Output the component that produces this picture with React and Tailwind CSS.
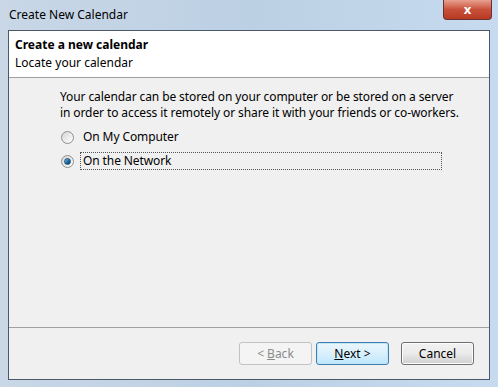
import React from "react";

function Radio({ checked }) {
  return (
    <span className="relative inline-flex h-[13px] w-[13px] items-center justify-center rounded-full border border-[#8e8f8f] bg-gradient-to-br from-[#d6d6d6] to-[#ffffff]">
      {checked && (
        <span className="h-[7px] w-[7px] rounded-full bg-gradient-to-br from-[#8ad0f0] via-[#1f6fa6] to-[#0f3e6a] border border-[#1d4f7a]" />
      )}
    </span>
  );
}

function Button({ children, focused, disabled, className = "" }) {
  return (
    <div
      className={
        "flex h-[23px] w-[73px] items-center justify-center rounded-[3px] border text-[12px] " +
        (disabled
          ? "border-[#c2c2c2] bg-[#f4f4f4] text-[#8b8b8b] "
          : focused
          ? "border-[#3c7fb1] bg-gradient-to-b from-[#eaf6fd] via-[#d9f0fc] to-[#bee6fd] text-black shadow-[inset_0_0_0_1px_#c4e5f6] "
          : "border-[#707070] bg-gradient-to-b from-[#f2f2f2] via-[#ebebeb] to-[#cfcfcf] text-black shadow-[inset_0_0_0_1px_#fcfcfc] ") +
        className
      }
    >
      {children}
    </div>
  );
}

export default function App() {
  return (
    <div
      className="relative h-[387px] w-[498px] overflow-hidden bg-gradient-to-r from-[#c9d7e6] via-[#bcd0e4] to-[#c6dbef]"
      style={{ fontFamily: '"Segoe UI", "Noto Sans", "Open Sans", sans-serif' }}
    >
      {/* Title bar */}
      <div className="flex h-[30px] items-center pl-[9px]">
        <span className="text-[12px] text-black">Create New Calendar</span>
      </div>

      {/* Close button */}
      <div className="absolute right-[6px] top-0 flex h-[20px] w-[49px] items-center justify-center rounded-b-[4px] border border-t-0 border-[#6b3030] bg-gradient-to-b from-[#e8a090] via-[#c8503a] to-[#b83a22]">
        <span className="text-[13px] font-bold leading-none text-white">x</span>
      </div>

      {/* Client area */}
      <div className="mx-[8px] flex h-[350px] flex-col border border-[#4a5868] bg-[#f0f0f0]">
        {/* Header */}
        <div className="flex h-[47px] flex-col justify-center border-b border-[#a0a0a0] bg-white pl-[6px] text-[12px] leading-[18px] text-black">
          <div className="font-bold">Create a new calendar</div>
          <div>Locate your calendar</div>
        </div>

        {/* Body */}
        <div className="flex-1 pl-[51px] pt-[11px] text-[12px] tracking-[-0.1px] text-black">
          <p className="leading-[16px]">
            Your calendar can be stored on your computer or be stored on a server
            <br />
            in order to access it remotely or share it with your friends or co-workers.
          </p>
          <div className="mt-[7px] flex flex-col gap-[6px]">
            <div className="flex h-[18px] items-center">
              <span className="ml-[1px] mr-[6px] flex">
                <Radio />
              </span>
              <span className="px-[3px]">On My Computer</span>
            </div>
            <div className="flex h-[18px] items-center">
              <span className="ml-[1px] mr-[6px] flex">
                <Radio checked />
              </span>
              <span className="flex h-[18px] w-[362px] items-center border border-dotted border-[#555] px-[2px]">
                On the Network
              </span>
            </div>
          </div>
        </div>

        {/* Button bar */}
        <div className="flex h-[52px] items-center justify-end gap-[4px] border-t border-[#a0a0a0] pr-[15px]">
          <Button disabled>
            &lt; <span className="ml-[3px] underline">B</span>ack
          </Button>
          <Button focused>
            <span className="underline">N</span>ext &gt;
          </Button>
          <Button className="ml-[8px]">Cancel</Button>
        </div>
      </div>
    </div>
  );
}
